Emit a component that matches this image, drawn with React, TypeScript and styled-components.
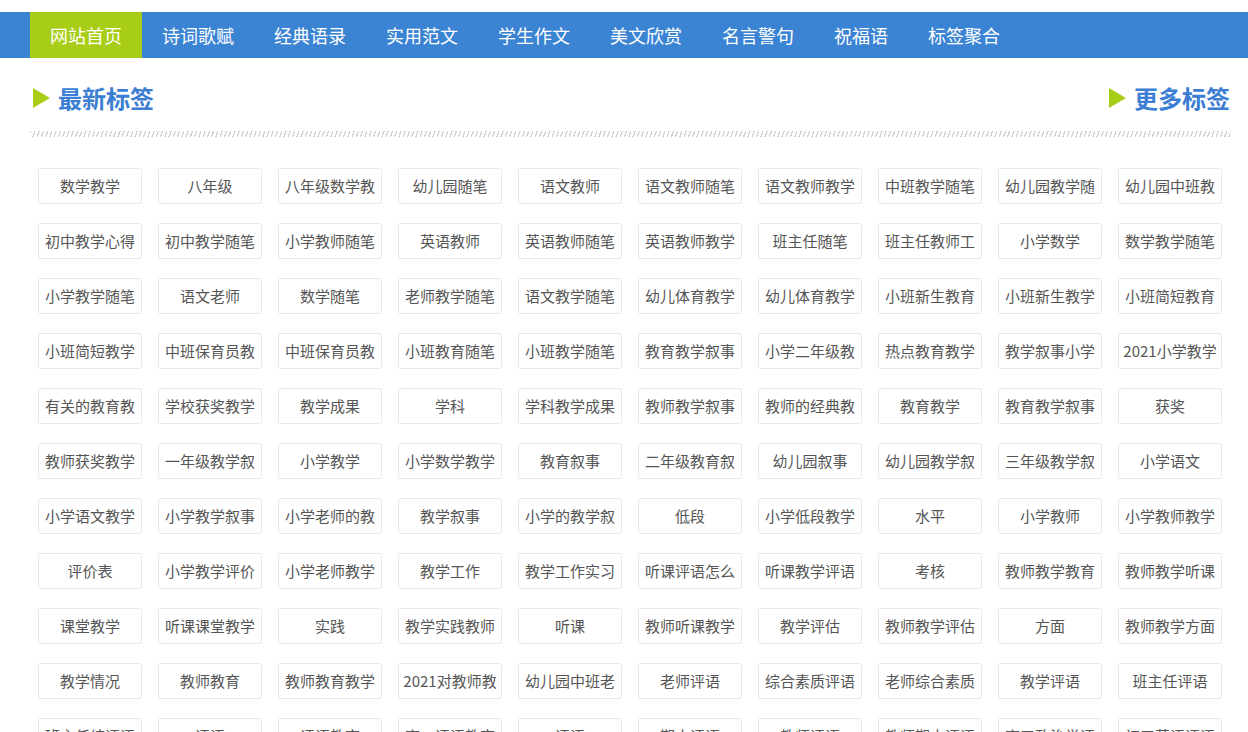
import styled, { createGlobalStyle } from 'styled-components'

const GlobalStyle = createGlobalStyle`
  html, body {
    margin: 0;
    padding: 0;
    background: #fff;
    font-family: "Microsoft YaHei", "Noto Sans CJK SC", "Noto Sans", sans-serif;
  }
  * { box-sizing: border-box; }
`

const navItems = ['网站首页', '诗词歌赋', '经典语录', '实用范文', '学生作文', '美文欣赏', '名言警句', '祝福语', '标签聚合']

const tags = [
  '数学教学', '八年级', '八年级数学教', '幼儿园随笔', '语文教师', '语文教师随笔', '语文教师教学', '中班教学随笔', '幼儿园教学随', '幼儿园中班教',
  '初中教学心得', '初中教学随笔', '小学教师随笔', '英语教师', '英语教师随笔', '英语教师教学', '班主任随笔', '班主任教师工', '小学数学', '数学教学随笔',
  '小学教学随笔', '语文老师', '数学随笔', '老师教学随笔', '语文教学随笔', '幼儿体育教学', '幼儿体育教学', '小班新生教育', '小班新生教学', '小班简短教育',
  '小班简短教学', '中班保育员教', '中班保育员教', '小班教育随笔', '小班教学随笔', '教育教学叙事', '小学二年级教', '热点教育教学', '教学叙事小学', '2021小学教学',
  '有关的教育教', '学校获奖教学', '教学成果', '学科', '学科教学成果', '教师教学叙事', '教师的经典教', '教育教学', '教育教学叙事', '获奖',
  '教师获奖教学', '一年级教学叙', '小学教学', '小学数学教学', '教育叙事', '二年级教育叙', '幼儿园叙事', '幼儿园教学叙', '三年级教学叙', '小学语文',
  '小学语文教学', '小学教学叙事', '小学老师的教', '教学叙事', '小学的教学叙', '低段', '小学低段教学', '水平', '小学教师', '小学教师教学',
  '评价表', '小学教学评价', '小学老师教学', '教学工作', '教学工作实习', '听课评语怎么', '听课教学评语', '考核', '教师教学教育', '教师教学听课',
  '课堂教学', '听课课堂教学', '实践', '教学实践教师', '听课', '教师听课教学', '教学评估', '教师教学评估', '方面', '教师教学方面',
  '教学情况', '教师教育', '教师教育教学', '2021对教师教', '幼儿园中班老', '老师评语', '综合素质评语', '老师综合素质', '教学评语', '班主任评语',
  '班主任综评语', '评语', '评语教育', '高一评语教育', '评语', '期末评语', '教师评语', '教师期末评语', '高三政治学评', '初三英语评语',
]

export default function App() {
  return (
    <>
      <GlobalStyle />
      <NavBar>
        <NavInner>
          {navItems.map((n, i) => (
            <NavItem key={n} $active={i === 0}>{n}</NavItem>
          ))}
        </NavInner>
      </NavBar>
      <Main>
        <HeadRow>
          <Title><Arrow />最新标签</Title>
          <Title><Arrow />更多标签</Title>
        </HeadRow>
        <Hatch />
        <TagList>
          {tags.map((t, i) => (
            <Tag key={i}>{t}</Tag>
          ))}
        </TagList>
      </Main>
    </>
  )
}

const NavBar = styled.div`
  margin-top: 12px;
  height: 46px;
  background: #3b83d3;
`

const NavInner = styled.div`
  width: 1200px;
  height: 100%;
  margin-left: 30px;
  display: flex;
`

const NavItem = styled.a<{ $active?: boolean }>`
  display: flex;
  align-items: center;
  padding: 0 20px;
  font-size: 18px;
  color: #fff;
  cursor: pointer;
  background: ${p => (p.$active ? '#a8cd16' : 'transparent')};
`

const Main = styled.div`
  width: 1200px;
  margin-left: 30px;
`

const HeadRow = styled.div`
  display: flex;
  justify-content: space-between;
  align-items: center;
  height: 40px;
  margin-top: 20px;
`

const Title = styled.h2`
  display: flex;
  align-items: center;
  gap: 8px;
  margin: 0;
  font-size: 24px;
  font-weight: bold;
  color: #3b7ed3;
  line-height: 40px;
`

const Arrow = styled.span`
  display: inline-block;
  width: 0;
  height: 0;
  margin-left: 3px;
  border-top: 10px solid transparent;
  border-bottom: 10px solid transparent;
  border-left: 17px solid #a8cd16;
`

const Hatch = styled.div`
  height: 6px;
  margin-top: 13px;
  background: repeating-linear-gradient(110deg, #d2d2d2 0 1.3px, transparent 1.3px 4px);
`

const TagList = styled.div`
  display: grid;
  grid-template-columns: repeat(10, 104px);
  column-gap: 16px;
  row-gap: 19px;
  padding: 31px 8px 20px;
`

const Tag = styled.a`
  display: block;
  height: 36px;
  line-height: 34px;
  border: 1px solid #e8e8e8;
  border-radius: 3px;
  text-align: center;
  font-size: 15px;
  color: #555;
  white-space: nowrap;
  overflow: hidden;
  cursor: pointer;
`
